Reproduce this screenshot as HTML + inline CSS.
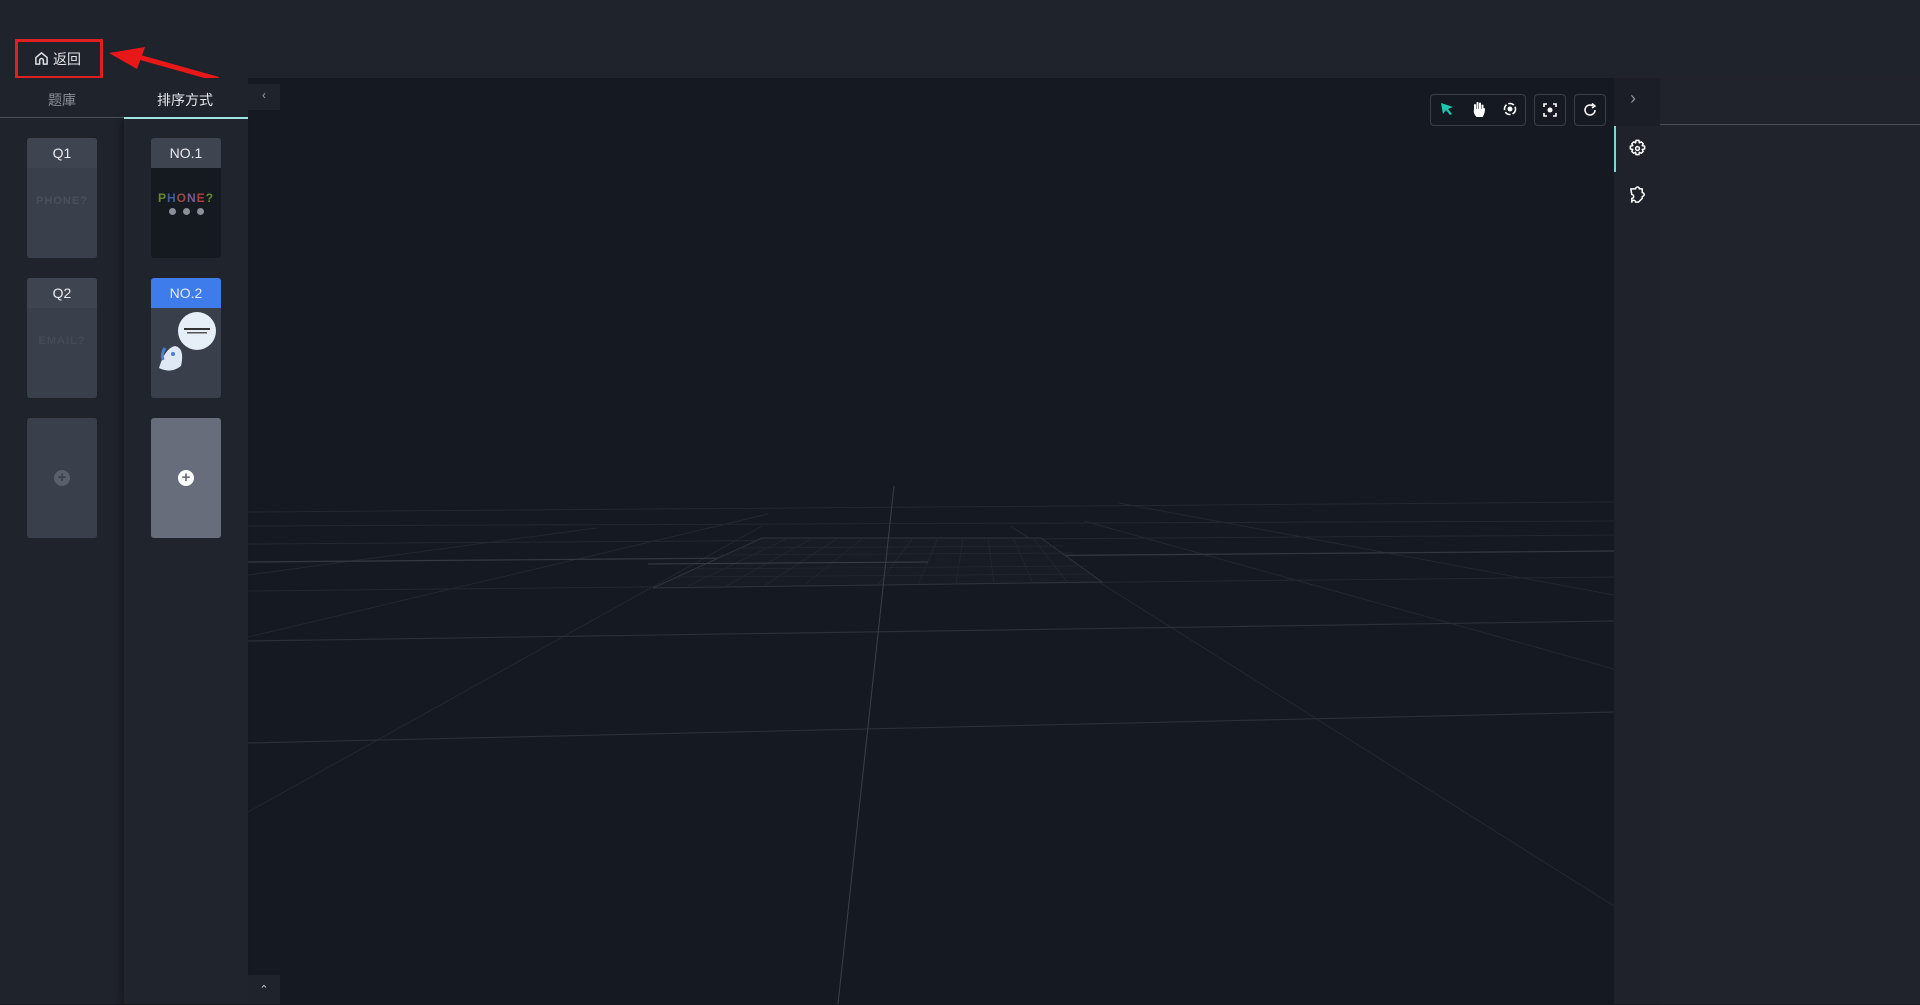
<!DOCTYPE html>
<html><head><meta charset="utf-8">
<style>
*{margin:0;padding:0;box-sizing:border-box}
body{width:1920px;height:1004px;overflow:hidden;background:#151921;font-family:"Liberation Sans","Noto Sans CJK SC",sans-serif;position:relative}
.abs{position:absolute}
.header{left:0;top:0;width:1920px;height:78px;background:#1f232c}
.col1{left:0;top:78px;width:124px;height:926px;background:#1f232b}
.col2{left:124px;top:119px;width:124px;height:885px;background:#20242d;box-shadow:-4px 0 6px rgba(0,0,0,.25)}
.tabs{left:0;top:78px;width:248px;height:41px;background:#1f232b}
.card{position:absolute;width:70px;height:120px;border-radius:3px;background:#3a404b;overflow:hidden}
.card .hd{height:30px;line-height:30px;text-align:center;color:#e8eaee;font-size:14px;background:#3f4550}
.tb{position:absolute;border:1px solid #3a3f49;border-radius:4px;height:32px;top:94px}
</style></head><body>
<div class="abs header"></div>
<div class="abs" style="left:15px;top:39px;width:88px;height:40px;border:3px solid #e02020"></div>
<svg class="abs" style="left:34px;top:51px" width="15" height="15" viewBox="0 0 16 16"><path d="M2 14V7L8 2l6 5v7H10V10a2 2 0 0 0-4 0v4z" fill="none" stroke="#dde0e5" stroke-width="1.6" stroke-linejoin="round"/></svg>
<div class="abs" style="left:53px;top:49px;color:#e4e6ea;font-size:14px">返回</div>
<svg class="abs" style="left:105px;top:45px" width="115" height="40"><path d="M112 34 L30 11" stroke="#e81818" stroke-width="5" stroke-linecap="round"/><path d="M4 8 L40 2 L32 24 Z" fill="#e81818"/></svg>

<div class="abs col1"></div>
<div class="abs tabs"></div>
<div class="abs col2"></div>
<div class="abs" style="left:0;top:117px;width:124px;height:1px;background:#4a4f58"></div>
<div class="abs" style="left:124px;top:117px;width:124px;height:2px;background:#9fe3e3"></div>
<div class="abs" style="left:48px;top:90px;color:#8a8f98;font-size:14px">题庫</div>
<div class="abs" style="left:157px;top:90px;color:#e6e8ec;font-size:14px">排序方式</div>
<div class="abs" style="left:248px;top:84px;width:32px;height:26px;background:#1f232b;color:#9aa0aa;font-size:12px;text-align:center;line-height:22px">‹</div>
<div class="abs" style="left:248px;top:975px;width:32px;height:29px;background:#1f232b;color:#c8ccd3;font-size:11px;text-align:center;line-height:30px">⌃</div>

<div class="card" style="left:27px;top:138px"><div class="hd">Q1</div>
<div style="text-align:center;color:#4a505b;font-weight:bold;font-size:11px;margin-top:27px;letter-spacing:1px">PHONE?</div></div>
<div class="card" style="left:27px;top:278px"><div class="hd">Q2</div>
<div style="text-align:center;color:#454b56;font-weight:bold;font-size:11px;margin-top:27px;letter-spacing:1px">EMAIL?</div></div>
<div class="card" style="left:27px;top:418px;background:#3a404b"><div style="position:absolute;left:27px;top:52px;width:16px;height:16px;border-radius:50%;background:#5a606b;color:#3a404b;font-size:15px;line-height:16px;text-align:center;font-weight:bold">+</div></div>

<div class="card" style="left:151px;top:138px;background:#151920"><div class="hd">NO.1</div>
<div style="text-align:center;font-weight:bold;font-size:12px;margin-top:23px;letter-spacing:1px"><span style="color:#6b8a2e">P</span><span style="color:#3f5e9c">H</span><span style="color:#a04848">O</span><span style="color:#7a5a9a">N</span><span style="color:#b04040">E</span><span style="color:#6b8a2e">?</span></div>
<div style="display:flex;gap:7px;justify-content:center;margin-top:3px"><i style="width:7px;height:7px;border-radius:50%;background:#8a8f98"></i><i style="width:7px;height:7px;border-radius:50%;background:#8a8f98"></i><i style="width:7px;height:7px;border-radius:50%;background:#8a8f98"></i></div></div>
<div class="card" style="left:151px;top:278px"><div class="hd" style="background:#3d7cea">NO.2</div>
<svg width="70" height="90"><circle cx="46" cy="23" r="19" fill="#e6eef8"/><rect x="33" y="20" width="26" height="2" fill="#333"/><rect x="36" y="24" width="20" height="1.5" fill="#555"/><path d="M8 60 Q14 40 24 38 Q34 40 30 58 Q20 66 8 60Z" fill="#dfe8f5"/><path d="M14 40 Q10 46 12 52" stroke="#4a7ed0" stroke-width="3" fill="none"/><circle cx="22" cy="46" r="2" fill="#4a7ed0"/></svg></div>
<div class="card" style="left:151px;top:418px;background:#676d7a"><div style="position:absolute;left:27px;top:52px;width:16px;height:16px;border-radius:50%;background:#fff;color:#676d7a;font-size:15px;line-height:16px;text-align:center;font-weight:bold">+</div></div>

<!-- grid -->
<svg class="abs" style="left:248px;top:78px" width="1366" height="926">
<g stroke="#232831" stroke-width="1" fill="none">
<line x1="0" y1="434" x2="1366" y2="424"/>
<line x1="0" y1="448" x2="1366" y2="443"/>
<line x1="0" y1="466" x2="1366" y2="457"/>
<line x1="0" y1="513" x2="1366" y2="499"/>
<line x1="0" y1="734" x2="514" y2="448"/>
<line x1="0" y1="559" x2="520" y2="436"/>
<line x1="0" y1="497" x2="348" y2="450"/>
<line x1="762" y1="448" x2="1366" y2="828"/>
<line x1="836" y1="443" x2="1366" y2="591"/>
<line x1="871" y1="425" x2="1366" y2="517"/>
</g>
<g stroke="#2a2f38" stroke-width="1.2" fill="none">
<line x1="0" y1="563" x2="1366" y2="543"/>
<line x1="0" y1="665" x2="1366" y2="634"/>
</g>
<line x1="0" y1="484" x2="1366" y2="473" stroke="#323842" stroke-width="1.3"/>
<polygon points="514,460 793,460 854,504 405,510" fill="#181c24" stroke="#2e343e"/>
<g stroke="#232830" stroke-width="0.8">
<line x1="490" y1="470" x2="815" y2="468"/><line x1="470" y1="477" x2="825" y2="475"/><line x1="450" y1="491" x2="838" y2="488"/><line x1="430" y1="499" x2="846" y2="496"/>
<line x1="540" y1="460" x2="440" y2="508"/><line x1="565" y1="460" x2="478" y2="508"/><line x1="590" y1="460" x2="516" y2="508"/><line x1="615" y1="460" x2="555" y2="508"/><line x1="665" y1="460" x2="630" y2="507"/><line x1="690" y1="460" x2="670" y2="507"/><line x1="715" y1="460" x2="708" y2="506"/><line x1="740" y1="460" x2="746" y2="506"/><line x1="765" y1="460" x2="785" y2="505"/><line x1="785" y1="460" x2="820" y2="505"/>
</g>
<line x1="400" y1="486" x2="680" y2="484" stroke="#3a404a"/>
<line x1="646" y1="408" x2="590" y2="926" stroke="#3a404a"/>
</svg>

<div class="tb" style="left:1430px;width:96px"></div>
<svg class="abs" style="left:1440px;top:102px" width="14" height="14" viewBox="0 0 14 14"><path d="M1 1 L13 5 L8 7 L12 12 L10 13 L6 8 L3 12Z" fill="#1ec7b0"/></svg>
<svg class="abs" style="left:1472px;top:101px" width="14" height="16" viewBox="0 0 14 16"><path d="M3 9V4M5.5 8V2M8 8V2.5M10.5 9V4.5M3 8 Q2 12 5 15 H10 Q12 12 12 8" stroke="#fff" stroke-width="2" fill="#fff" stroke-linecap="round"/></svg>
<svg class="abs" style="left:1503px;top:102px" width="14" height="14" viewBox="0 0 14 14"><circle cx="7" cy="7" r="5.5" fill="none" stroke="#fff" stroke-width="1.6" stroke-dasharray="6 2"/><circle cx="7" cy="7" r="2.5" fill="#fff"/></svg>
<div class="tb" style="left:1534px;width:32px"></div>
<svg class="abs" style="left:1543px;top:103px" width="14" height="14" viewBox="0 0 14 14"><path d="M1 4V1H4M10 1H13V4M13 10V13H10M4 13H1V10" stroke="#fff" stroke-width="1.6" fill="none"/><circle cx="7" cy="7" r="2.5" fill="#fff"/></svg>
<div class="tb" style="left:1574px;width:32px"></div>
<svg class="abs" style="left:1583px;top:103px" width="14" height="14" viewBox="0 0 14 14"><path d="M12 7A5 5 0 1 1 10 3" stroke="#fff" stroke-width="1.5" fill="none"/><path d="M9 0.5L12 3L9 5" stroke="#fff" stroke-width="1.5" fill="none"/></svg>

<div class="abs" style="left:1614px;top:78px;width:46px;height:926px;background:#1f222b"></div>
<div class="abs" style="left:1614px;top:78px;width:46px;height:48px;background:#1b1e26"></div>
<div class="abs" style="left:1630px;top:88px;color:#8a8f98;font-size:18px">›</div>
<div class="abs" style="left:1614px;top:126px;width:2px;height:46px;background:#7fd6d6"></div>
<svg class="abs" style="left:1628px;top:139px" width="19" height="19" viewBox="0 0 20 20"><path d="M8.5 1.5h3l.5 2.5 2-1 2 2-1 2 2.5.5v3l-2.5.5 1 2-2 2-2-1-.5 2.5h-3l-.5-2.5-2 1-2-2 1-2-2.5-.5v-3l2.5-.5-1-2 2-2 2 1z" fill="none" stroke="#fff" stroke-width="1.6" stroke-linejoin="round"/><circle cx="10" cy="10" r="2" fill="none" stroke="#fff" stroke-width="1.5"/></svg>
<svg class="abs" style="left:1628px;top:186px" width="19" height="19" viewBox="0 0 20 20"><path d="M3 3h5a2 2 0 1 1 4 0h3v4a2 2 0 1 1 0 4v2l-4 4H8a2 2 0 1 0-4 0V13a2 2 0 1 0 0-4z" fill="none" stroke="#fff" stroke-width="1.6" stroke-linejoin="round"/></svg>
<div class="abs" style="left:1660px;top:78px;width:260px;height:926px;background:#20232c"></div>
<div class="abs" style="left:1660px;top:124px;width:260px;height:1px;background:#4a4e57"></div>
</body></html>
